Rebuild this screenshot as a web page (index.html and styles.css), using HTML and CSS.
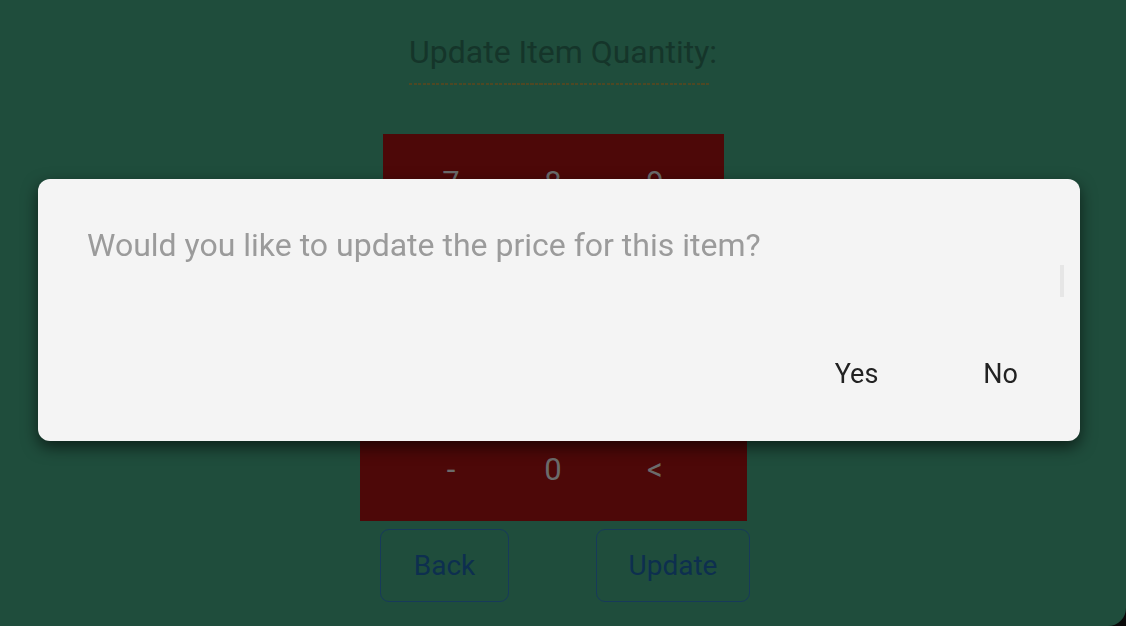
FILE: index.html
```html
<!DOCTYPE html>
<html>
<head>
<meta charset="utf-8">
<link rel="stylesheet" href="styles.css">
</head>
<body>
<div class="screen">
  <h1 class="title">Update Item Quantity:</h1>
  <div class="title-rule"></div>
  <div class="keypad">
    <div class="row narrow"><span>7</span><span>8</span><span>9</span></div>
    <div class="row narrow"><span>4</span><span>5</span><span>6</span></div>
    <div class="row narrow"><span>1</span><span>2</span><span>3</span></div>
    <div class="row wide"><span>-</span><span>0</span><span>&lt;</span></div>
  </div>
  <div class="actions">
    <button class="btn btn-back">Back</button>
    <button class="btn btn-update">Update</button>
  </div>
</div>
<div class="dialog">
  <p class="dialog-text">Would you like to update the price for this item?</p>
  <div class="scrollbar"></div>
  <div class="dialog-actions">
    <span class="dlg-btn">Yes</span>
    <span class="dlg-btn">No</span>
  </div>
</div>
</body>
</html>
```

FILE: styles.css
```css
html, body {
  margin: 0;
  padding: 0;
  background: #0a0a0a;
  font-family: Roboto, "Liberation Sans", sans-serif;
}
.screen {
  width: 1126px;
  height: 626px;
  background: #1f4d3c;
  border-bottom-right-radius: 18px;
  display: flex;
  flex-direction: column;
  align-items: center;
  overflow: hidden;
}
.title {
  margin: 32px 0 0 0;
  font-size: 32px;
  font-weight: 400;
  line-height: 40px;
  color: #15352a;
}
.title-rule {
  margin: 11px 0 0 -8px;
  width: 300px;
  height: 2px;
  background: repeating-linear-gradient(to right, #4d4824 0 3px, transparent 3px 4.5px);
}
.keypad {
  margin-top: 49px;
  margin-left: -20px;
  display: flex;
  flex-direction: column;
  align-items: center;
}
.row {
  box-sizing: border-box;
  height: 97px;
  background: #4d0808;
  display: grid;
  grid-template-columns: repeat(3, 102px);
  justify-content: center;
  align-items: center;
  justify-items: center;
  font-size: 31px;
  color: #6b6b6b;
}
.row.narrow { width: 341px; }
.row.wide { width: 387px; height: 96px; padding-bottom: 8px; }
.actions {
  margin-top: 8px;
  margin-left: 4px;
  display: flex;
  gap: 87px;
}
.btn {
  height: 73px;
  background: transparent;
  border: 1px solid #173a5a;
  border-radius: 9px;
  font-family: Roboto, "Liberation Sans", sans-serif;
  font-size: 28px;
  color: #0d2f4f;
  padding: 0 0 0 0;
}
.btn-back { width: 129px; }
.btn-update { width: 154px; }
.dialog {
  position: fixed;
  left: 38px;
  top: 179px;
  width: 1042px;
  height: 262px;
  background: #f4f4f4;
  border-radius: 12px;
  box-shadow: 0 6px 16px rgba(0, 0, 0, 0.6);
  display: flex;
  flex-direction: column;
}
.dialog-text {
  margin: 46px 0 0 49px;
  font-size: 32px;
  line-height: 40px;
  color: #9b9b9b;
}
.scrollbar {
  position: absolute;
  right: 16px;
  top: 86px;
  width: 4px;
  height: 32px;
  background: #e6e6e6;
}
.dialog-actions {
  margin-top: auto;
  margin-bottom: 47px;
  display: flex;
  justify-content: flex-end;
  padding-right: 62px;
  gap: 105px;
}
.dlg-btn {
  font-size: 27px;
  line-height: 40px;
  color: #222222;
}
```
